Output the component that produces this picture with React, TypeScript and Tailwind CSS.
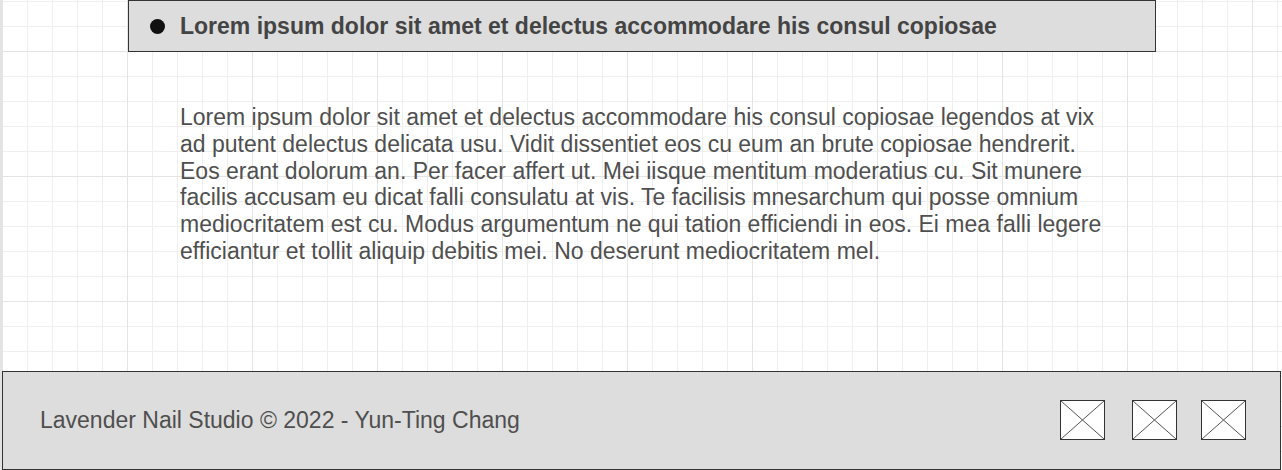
import React from "react";

const paragraph =
  "Lorem ipsum dolor sit amet et delectus accommodare his consul copiosae legendos at vix ad putent delectus delicata usu. Vidit dissentiet eos cu eum an brute copiosae hendrerit. Eos erant dolorum an. Per facer affert ut. Mei iisque mentitum moderatius cu. Sit munere facilis accusam eu dicat falli consulatu at vis. Te facilisis mnesarchum qui posse omnium mediocritatem est cu. Modus argumentum ne qui tation efficiendi in eos. Ei mea falli legere efficiantur et tollit aliquip debitis mei. No deserunt mediocritatem mel.";

// placeholder image box (wireframe style)
function ImageBox({ className }: { className?: string }) {
  return (
    <svg
      width="45"
      height="40"
      viewBox="0 0 45 40"
      className={className}
    >
      <rect x="0.5" y="0.5" width="44" height="39" fill="#ffffff" stroke="#333333" strokeWidth="1" />
      <line x1="1" y1="1" x2="44" y2="39" stroke="#555555" strokeWidth="1" />
      <line x1="44" y1="1" x2="1" y2="39" stroke="#555555" strokeWidth="1" />
    </svg>
  );
}

export default function App() {
  return (
    <div
      className="w-[1282px] h-[470px] flex flex-col overflow-hidden bg-white border-l-2 border-[#e3e3e3] font-['Liberation_Sans',Arial,sans-serif] bg-[linear-gradient(to_right,#e4e4e4_1px,transparent_1px),linear-gradient(to_bottom,#e4e4e4_1px,transparent_1px),linear-gradient(to_right,#efefef_1px,transparent_1px),linear-gradient(to_bottom,#efefef_1px,transparent_1px)] bg-[size:125px_125px,125px_125px,25px_25px,25px_25px] bg-[position:0px_51px,0px_51px,0px_1px,0px_1px]"
    >
      <main className="h-[371px] pl-[126px]">
        <div className="w-[1028px] h-[52px] flex items-center gap-[15px] pl-[21px] bg-[#dddddd] border border-[#333333]">
          <span className="w-[15px] h-[15px] rounded-full bg-[#111111]" />
          <h1 className="text-[23px] font-bold text-[#444444]">
            Lorem ipsum dolor sit amet et delectus accommodare his consul copiosae
          </h1>
        </div>
        <p className="mt-[52px] ml-[52px] w-[932px] text-[23px] leading-[26.8px] text-[#4f4f4f]">
          {paragraph}
        </p>
      </main>

      <footer className="w-[1279px] h-[99px] flex items-center justify-between bg-[#dddddd] border border-[#333333] pl-[37px] pr-[34px]">
        <span className="text-[23px] text-[#4f4f4f]">
          Lavender Nail Studio © 2022 - Yun-Ting Chang
        </span>
        <div className="flex items-center mb-[2px]">
          <ImageBox />
          <ImageBox className="ml-[27px]" />
          <ImageBox className="ml-[24px]" />
        </div>
      </footer>
    </div>
  );
}
